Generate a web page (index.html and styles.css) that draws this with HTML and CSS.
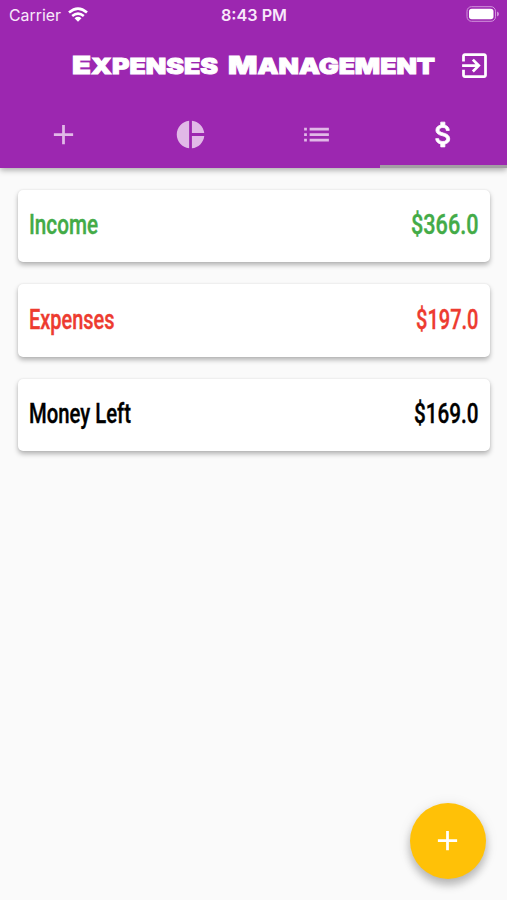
FILE: index.html
```html
<!DOCTYPE html>
<html lang="en">
<head>
<meta charset="utf-8">
<title>Expenses Management</title>
<link rel="stylesheet" href="styles.css">
</head>
<body>
<header class="appbar">
  <div class="status">
    <div class="carrier">
      <svg width="54" height="18"><text x="0" y="12.5" textLength="52" lengthAdjust="spacingAndGlyphs">Carrier</text></svg>
      <svg class="wifi" width="20" height="15" viewBox="0 0 20 15" fill="none" stroke="#fff" stroke-width="2.6"><path d="M1 5.6Q10-2.3 19 5.6M4.2 9Q10 4.2 15.8 9"/><path fill="#fff" stroke="none" d="M6.5 11.2Q10 8.4 13.5 11.2L10 14.7Z"/></svg>
    </div>
    <svg class="time" width="68" height="18"><text x="0" y="12.5" textLength="66" lengthAdjust="spacingAndGlyphs">8:43 PM</text></svg>
    <svg class="battery" width="34" height="16" viewBox="0 0 34 16"><rect x="1" y=".7" width="28.5" height="14.6" rx="4.5" fill="none" stroke="#d294dc" stroke-width="1"/><rect x="3" y="2.7" width="24.5" height="10.6" rx="2.8" fill="#fff"/><path d="M31 5.5q2 .8 2 2.5t-2 2.5z" fill="#d294dc"/></svg>
  </div>
  <div class="titlebar">
    <svg class="title" width="366" height="30">
      <text x="0" y="23" textLength="146" lengthAdjust="spacingAndGlyphs"><tspan class="initial">E</tspan>XPENSES</text>
      <text x="156" y="23" textLength="207" lengthAdjust="spacingAndGlyphs"><tspan class="initial">M</tspan>ANAGEMENT</text>
    </svg>
    <svg class="icon exit" viewBox="0 0 24 24"><path d="M10.09 15.59L11.5 17l5-5-5-5-1.41 1.41L12.67 11H3v2h9.67l-2.58 2.59zM19 3H5c-1.11 0-2 .9-2 2v4h2V5h14v14H5v-4H3v4c0 1.1.89 2 2 2h14c1.1 0 2-.9 2-2V5c0-1.1-.9-2-2-2z"/></svg>
  </div>
  <nav class="tabs">
    <div class="tab"><svg class="icon" viewBox="0 0 24 24"><path d="M19 13h-6v6h-2v-6H5v-2h6V5h2v6h6v2z"/></svg></div>
    <div class="tab"><svg class="icon" viewBox="0 0 24 24"><path d="M11 2v20c-5.07-.5-9-4.79-9-10s3.93-9.5 9-10zm2.03 0v8.99H22c-.47-4.74-4.24-8.52-8.97-8.99zm0 11.01V22c4.74-.47 8.5-4.25 8.97-8.99h-8.97z"/></svg></div>
    <div class="tab"><svg class="icon" viewBox="0 0 24 24"><path d="M3 13h2v-2H3v2zm0 4h2v-2H3v2zm0-8h2V7H3v2zm4 4h14v-2H7v2zm0 4h14v-2H7v2zM7 7v2h14V7H7z"/></svg></div>
    <div class="tab active"><svg class="icon" viewBox="0 0 24 24"><path d="M11.8 10.9c-2.27-.59-3-1.2-3-2.15 0-1.09 1.01-1.85 2.7-1.85 1.78 0 2.44.85 2.5 2.1h2.21c-.07-1.72-1.12-3.3-3.21-3.81V3h-3v2.16c-1.94.42-3.5 1.68-3.5 3.61 0 2.31 1.91 3.46 4.7 4.13 2.5.6 3 1.48 3 2.41 0 .69-.49 1.79-2.7 1.79-2.06 0-2.87-.92-2.98-2.1h-2.2c.12 2.19 1.76 3.42 3.68 3.83V21h3v-2.15c1.95-.37 3.5-1.5 3.5-3.55 0-2.84-2.43-3.81-4.7-4.4z"/></svg></div>
  </nav>
</header>
<main class="list">
  <section class="card income">
    <svg width="90" height="40"><text x="0" y="29" textLength="69" lengthAdjust="spacingAndGlyphs">Income</text></svg>
    <svg width="68" height="40"><text x="0" y="29" textLength="67.5" lengthAdjust="spacingAndGlyphs">$366.0</text></svg>
  </section>
  <section class="card expenses">
    <svg width="90" height="40"><text x="0" y="29" textLength="85.5" lengthAdjust="spacingAndGlyphs">Expenses</text></svg>
    <svg width="68" height="40"><text x="5" y="29" textLength="62.5" lengthAdjust="spacingAndGlyphs">$197.0</text></svg>
  </section>
  <section class="card">
    <svg width="110" height="40"><text x="0" y="29" textLength="102" lengthAdjust="spacingAndGlyphs">Money Left</text></svg>
    <svg width="68" height="40"><text x="3" y="29" textLength="64.5" lengthAdjust="spacingAndGlyphs">$169.0</text></svg>
  </section>
</main>
<button class="fab" aria-label="Add"><svg class="icon" viewBox="0 0 24 24"><path d="M19 13h-6v6h-2v-6H5v-2h6V5h2v6h6v2z"/></svg></button>
</body>
</html>
```
FILE: styles.css
```css
* { box-sizing: border-box; }
body {
  margin: 0;
  height: 900px;
  overflow: hidden;
  background: #fafafa;
  font-family: Inter, "Liberation Sans", sans-serif;
}
svg { display: block; overflow: visible; flex: none; }
.appbar {
  height: 168px;
  background: #9c27b0;
  box-shadow: 0 2px 6px rgba(0, 0, 0, .34);
}
.status {
  display: grid;
  grid-template-columns: 1fr 68px 1fr;
  height: 30px;
  padding: 8px 7px 0 9px;
  font-size: 16px;
}
.status text { fill: #f8e9fa; }
.carrier { display: flex; gap: 5px; }
.wifi { margin-top: -1px; }
.time { font-weight: 600; }
.battery { justify-self: end; margin-top: -2px; }
.titlebar {
  display: flex;
  align-items: center;
  justify-content: space-between;
  height: 71px;
  padding: 0 16px 0 72px;
}
.title { font-size: 21.5px; font-weight: 900; }
.title text { fill: #fff; stroke: #fff; stroke-width: .9px; }
.initial { font-size: 25px; }
.icon { width: 33px; height: 33px; fill: currentColor; }
.exit { color: #fff; }
.tabs { display: grid; grid-template-columns: repeat(4, 1fr); height: 67px; }
.tab {
  display: flex;
  justify-content: center;
  padding-top: 16.5px;
  color: #e1b9e7;
}
.active { color: #fff; border-bottom: 3px solid #a39da4; }
.active .icon { stroke: currentColor; stroke-width: .6px; }
.list { display: flex; flex-direction: column; gap: 22px; padding: 21.5px 17.5px; }
.card {
  display: flex;
  align-items: flex-start;
  justify-content: space-between;
  height: 72.5px;
  padding: 15.5px 11px 0 11.5px;
  border-radius: 5px;
  background: #fff;
  box-shadow: 0 3px 5px rgba(0, 0, 0, .28), 0 0 2px rgba(0, 0, 0, .1);
  font: 500 28.5px Roboto, sans-serif;
}
.card text { fill: currentColor; stroke: currentColor; stroke-width: .4px; }
.income { color: #43ab47; }
.expenses { color: #ed3b30; }
.fab {
  position: fixed;
  right: 21.5px;
  bottom: 21.5px;
  display: flex;
  align-items: center;
  justify-content: center;
  width: 76px;
  height: 76px;
  padding: 0;
  border: 0;
  border-radius: 50%;
  background: #ffc107;
  color: #fff;
  box-shadow: 0 6px 10px rgba(0, 0, 0, .24), 0 2px 14px rgba(0, 0, 0, .1);
}
```
